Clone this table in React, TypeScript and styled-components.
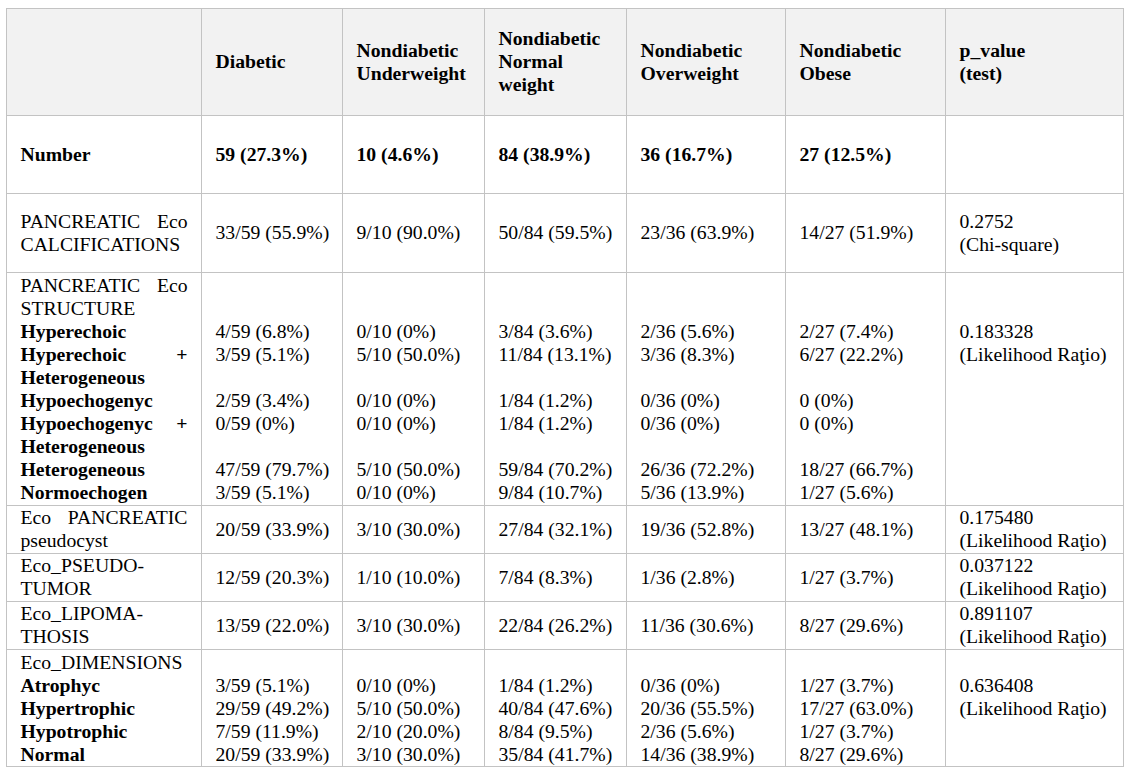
import React from 'react';
import styled, { createGlobalStyle } from 'styled-components';

const GlobalStyle = createGlobalStyle`
  html, body {
    margin: 0;
    padding: 0;
    background: #ffffff;
  }
  body {
    font-family: "Liberation Serif", "Times New Roman", serif;
    color: #000;
  }
`;

const Page = styled.div`
  padding: 7.5px 0 0 5.5px;
`;

const Table = styled.table`
  border-collapse: collapse;
  table-layout: fixed;
  width: 1117px;
  font-size: 19.7px;
  line-height: 23px;
`;

const Row = styled.tr<{ $h: number }>`
  height: ${(p) => p.$h}px;
`;

const HeadCell = styled.th`
  background: #f2f2f2;
  border: 1px solid #c3c3c3;
  padding: 0 13px 0 14px;
  text-align: left;
  font-weight: bold;
  vertical-align: middle;
`;

const Cell = styled.td<{ $top?: boolean; $bold?: boolean }>`
  border: 1px solid #c3c3c3;
  padding: ${(p) => (p.$top ? '1px 13px 0 14px' : '0 13px 0 14px')};
  vertical-align: ${(p) => (p.$top ? 'top' : 'middle')};
  font-weight: ${(p) => (p.$bold ? 'bold' : 'normal')};
  text-align: left;
`;

const Label = styled.div<{ $bold?: boolean }>`
  text-align: justify;
  font-weight: ${(p) => (p.$bold ? 'bold' : 'normal')};
`;

const Line = styled.div`
  white-space: nowrap;
`;

type LabelPart = { t: string; b?: boolean };
type DataRow = {
  h: number;
  top?: boolean;
  bold?: boolean;
  label: LabelPart[];
  cells: string[][];
  p: string[];
};

const widths = [195, 141, 142, 142, 159, 160, 178];

// each header is a list of forced lines; long ones wrap by themselves
const headers: string[][] = [
  [],
  ['Diabetic'],
  ['Nondiabetic Underweight'],
  ['Nondiabetic Normal weight'],
  ['Nondiabetic Overweight'],
  ['Nondiabetic Obese'],
  ['p_value', '(test)'],
];

const LR = '(Likelihood Raţio)';

const pad = (vals: string[], lead: number) => [...Array(lead).fill(''), ...vals];

const structure = (v: string[]) => pad([v[0], v[1], '', v[2], v[3], '', v[4], v[5]], 2);
const dims = (v: string[]) => pad(v, 1);

const rows: DataRow[] = [
  {
    h: 78,
    bold: true,
    label: [{ t: 'Number', b: true }],
    cells: [['59 (27.3%)'], ['10 (4.6%)'], ['84 (38.9%)'], ['36 (16.7%)'], ['27 (12.5%)']],
    p: [],
  },
  {
    h: 79,
    label: [{ t: 'PANCREATIC Eco CALCIFICATIONS' }],
    cells: [['33/59 (55.9%)'], ['9/10 (90.0%)'], ['50/84 (59.5%)'], ['23/36 (63.9%)'], ['14/27 (51.9%)']],
    p: ['0.2752', '(Chi-square)'],
  },
  {
    h: 233,
    top: true,
    label: [
      { t: 'PANCREATIC Eco STRUCTURE' },
      { t: 'Hyperechoic', b: true },
      { t: 'Hyperechoic + Heterogeneous', b: true },
      { t: 'Hypoechogenyc', b: true },
      { t: 'Hypoechogenyc + Heterogeneous', b: true },
      { t: 'Heterogeneous', b: true },
      { t: 'Normoechogen', b: true },
    ],
    cells: [
      structure(['4/59 (6.8%)', '3/59 (5.1%)', '2/59 (3.4%)', '0/59 (0%)', '47/59 (79.7%)', '3/59 (5.1%)']),
      structure(['0/10 (0%)', '5/10 (50.0%)', '0/10 (0%)', '0/10 (0%)', '5/10 (50.0%)', '0/10 (0%)']),
      structure(['3/84 (3.6%)', '11/84 (13.1%)', '1/84 (1.2%)', '1/84 (1.2%)', '59/84 (70.2%)', '9/84 (10.7%)']),
      structure(['2/36 (5.6%)', '3/36 (8.3%)', '0/36 (0%)', '0/36 (0%)', '26/36 (72.2%)', '5/36 (13.9%)']),
      structure(['2/27 (7.4%)', '6/27 (22.2%)', '0 (0%)', '0 (0%)', '18/27 (66.7%)', '1/27 (5.6%)']),
    ],
    p: ['', '', '0.183328', LR],
  },
  {
    h: 48,
    label: [{ t: 'Eco PANCREATIC pseudocyst' }],
    cells: [['20/59 (33.9%)'], ['3/10 (30.0%)'], ['27/84 (32.1%)'], ['19/36 (52.8%)'], ['13/27 (48.1%)']],
    p: ['0.175480', LR],
  },
  {
    h: 48,
    label: [{ t: 'Eco_PSEUDO-TUMOR' }],
    cells: [['12/59 (20.3%)'], ['1/10 (10.0%)'], ['7/84 (8.3%)'], ['1/36 (2.8%)'], ['1/27 (3.7%)']],
    p: ['0.037122', LR],
  },
  {
    h: 48,
    label: [{ t: 'Eco_LIPOMA-THOSIS' }],
    cells: [['13/59 (22.0%)'], ['3/10 (30.0%)'], ['22/84 (26.2%)'], ['11/36 (30.6%)'], ['8/27 (29.6%)']],
    p: ['0.891107', LR],
  },
  {
    h: 117,
    top: true,
    label: [
      { t: 'Eco_DIMENSIONS' },
      { t: 'Atrophyc', b: true },
      { t: 'Hypertrophic', b: true },
      { t: 'Hypotrophic', b: true },
      { t: 'Normal', b: true },
    ],
    cells: [
      dims(['3/59 (5.1%)', '29/59 (49.2%)', '7/59 (11.9%)', '20/59 (33.9%)']),
      dims(['0/10 (0%)', '5/10 (50.0%)', '2/10 (20.0%)', '3/10 (30.0%)']),
      dims(['1/84 (1.2%)', '40/84 (47.6%)', '8/84 (9.5%)', '35/84 (41.7%)']),
      dims(['0/36 (0%)', '20/36 (55.5%)', '2/36 (5.6%)', '14/36 (38.9%)']),
      dims(['1/27 (3.7%)', '17/27 (63.0%)', '1/27 (3.7%)', '8/27 (29.6%)']),
    ],
    p: ['', '0.636408', LR],
  },
];

function Lines({ items }: { items: string[] }) {
  return (
    <>
      {items.map((s, i) => (
        <Line key={i}>{s || '\u00a0'}</Line>
      ))}
    </>
  );
}

export default function App() {
  return (
    <Page>
      <GlobalStyle />
      <Table>
        <colgroup>
          {widths.map((w, i) => (
            <col key={i} style={{ width: w }} />
          ))}
        </colgroup>
        <thead>
          <Row $h={107}>
            {headers.map((h, i) => (
              <HeadCell key={i}>
                {h.map((l, li) => (
                  <div key={li}>{l}</div>
                ))}
              </HeadCell>
            ))}
          </Row>
        </thead>
        <tbody>
          {rows.map((r, ri) => (
            <Row key={ri} $h={r.h}>
              <Cell $top={r.top}>
                {r.label.map((l, li) => (
                  <Label key={li} $bold={l.b}>
                    {l.t}
                  </Label>
                ))}
              </Cell>
              {r.cells.map((c, ci) => (
                <Cell key={ci} $top={r.top} $bold={r.bold}>
                  <Lines items={c} />
                </Cell>
              ))}
              <Cell $top={r.top}>
                <Lines items={r.p} />
              </Cell>
            </Row>
          ))}
        </tbody>
      </Table>
    </Page>
  );
}
